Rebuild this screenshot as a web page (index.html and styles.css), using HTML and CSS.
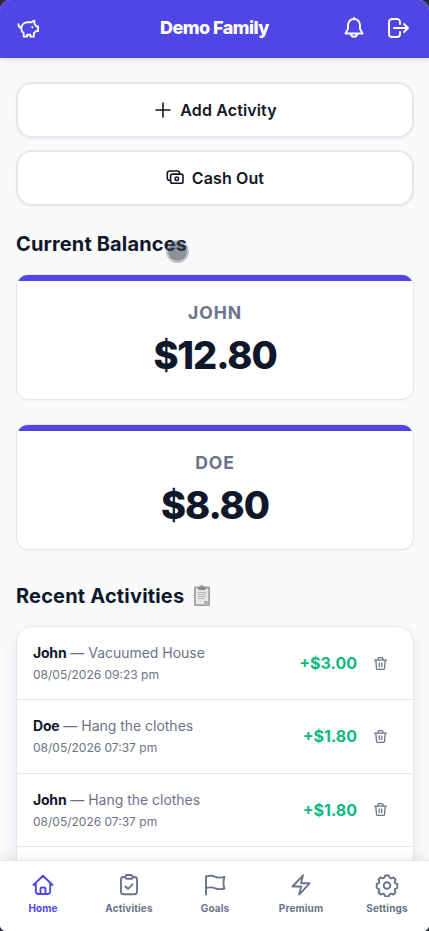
FILE: index.html
```html
<!DOCTYPE html>
<html lang="en">
<head>
<meta charset="utf-8">
<meta name="viewport" content="width=device-width, initial-scale=1">
<title>Demo Family</title>
<link rel="stylesheet" href="styles.css">
</head>
<body>
<svg class="sprite" aria-hidden="true">
  <symbol id="trash" viewBox="0 0 24 24"><path d="M2.500 6.500h19M8 6.200V4.500A2 2 0 0 1 10 2.500h4a2 2 0 0 1 2 2v1.700M4.500 6.800l1 12.200A2.500 2.500 0 0 0 8 21.500h8a2.500 2.500 0 0 0 2.500-2.500l1-12.200M10 11v6M14 11v6"/></symbol>
</svg>
<div class="app">
  <header class="topbar">
    <svg class="icon pig" viewBox="0 0 24 24"><path d="M1.500 7.500c0 2.300 1 3.700 3 3.700M4.500 12c0-4 3-6.500 7-6.500h4c.8-1.100 1.600-1.700 2.700-1.700v3.400c.9.700 1.500 1.600 1.900 2.600h1.900v5h-2.500c-.5.900-1.100 1.500-1.900 2v3.700h-3.600v-2h-3.500v2H7v-3.900c-1.600-1-2.500-2.500-2.500-4.600z"/><path class="eye" d="M16 10.500v.1"/></svg>
    <h1>Demo Family</h1>
    <div class="tools">
      <svg class="icon" viewBox="0 0 24 24"><path d="M12 3a6 6 0 0 0-6 6v3.500c0 1.700-2.500 3.600-2.500 5h17c0-1.400-2.500-3.300-2.500-5V9a6 6 0 0 0-6-6zM12 3V2M9 17.800a3 3 0 0 0 6 0"/></svg>
      <svg class="icon exit" viewBox="0 0 24 24"><path d="M14 8V6A3 3 0 0 0 11 3H6a3 3 0 0 0-3 3v12a3 3 0 0 0 3 3h5a3 3 0 0 0 3-3v-2M8 12h14M18 8l4 4-4 4"/></svg>
    </div>
  </header>
  <main>
    <div class="actions">
      <button type="button"><svg class="icon plus" viewBox="0 0 20 20"><path d="M10 3v14M3 10h14"/></svg>Add Activity</button>
      <button type="button"><svg class="icon cash" viewBox="0 0 18 18"><rect x="4.600" y="5.100" width="12.400" height="9.100" rx="1.800"/><path d="M4.300 11.300H3.500A2 2 0 0 1 1.300 9.300V4A2 2 0 0 1 3.300 2h8.400A1.800 1.800 0 0 1 13.500 4v.8"/><circle cx="10.800" cy="9.700" r="1.700"/></svg>Cash Out</button>
    </div>
    <h2 class="balances-title">Current Balances<span class="pointer"></span></h2>
    <div class="balances">
      <section class="balance"><h3>John</h3><p>$12.80</p></section>
      <section class="balance"><h3>Doe</h3><p>$8.80</p></section>
    </div>
    <h2 class="recent-title">Recent Activities
      <svg class="clipboard" viewBox="0 0 18 22"><path class="board" d="M1.500 2h15v18.500h-15z"/><path class="sheet" d="M3 4h12v12l-3 3H3z"/><path class="clip" d="M5.500 1.500h2a1.500 1.500 0 0 1 3 0h2V5h-7z"/><path class="lines" d="M5 7.500h8M5 9.500h8M5 11.500h8M5 13.500h6"/><path class="fold" d="M11.500 19v-3h3z"/></svg>
    </h2>
    <ul class="feed">
      <li><div><p class="what"><b>John</b> — Vacuumed House</p><time>08/05/2026 09:23 pm</time></div><strong>+$3.00</strong><svg class="icon trash"><use href="#trash"/></svg></li>
      <li><div><p class="what"><b>Doe</b> — Hang the clothes</p><time>08/05/2026 07:37 pm</time></div><strong>+$1.80</strong><svg class="icon trash"><use href="#trash"/></svg></li>
      <li><div><p class="what"><b>John</b> — Hang the clothes</p><time>08/05/2026 07:37 pm</time></div><strong>+$1.80</strong><svg class="icon trash"><use href="#trash"/></svg></li>
      <li></li>
    </ul>
  </main>
  <nav class="tabs">
    <a class="active"><svg class="icon" viewBox="0 0 24 24"><path d="M2.500 12L12 2.800 21.500 12M4.800 10v8.500a2.500 2.500 0 0 0 2.500 2.500h9.400a2.500 2.500 0 0 0 2.500-2.500V10M9.500 21v-5a1.500 1.500 0 0 1 1.500-1.500h2a1.500 1.500 0 0 1 1.500 1.500v5"/></svg>Home</a>
    <a><svg class="icon" viewBox="0 0 24 24"><path d="M8.500 4H6.500A2.500 2.500 0 0 0 4 6.500v12.200a2.500 2.500 0 0 0 2.500 2.500h11a2.500 2.500 0 0 0 2.500-2.500V6.500A2.500 2.500 0 0 0 17.500 4h-2M10.300 2h3.400a1.800 1.800 0 0 1 0 3.800h-3.400a1.800 1.800 0 0 1 0-3.800zM8.500 13.500l2.500 2.400 4.500-4.600"/></svg>Activities</a>
    <a><svg class="icon" viewBox="0 0 24 24"><path d="M3 21.500V3.500c4-1.200 7-.8 9.500.3 2.800 1.200 5.700 1 9 .1-1.300 4-1.300 8 0 11.600-3.300.9-6.200.9-9-.2-2.500-1-5.500-1.300-9.500-.3"/></svg>Goals</a>
    <a><svg class="icon" viewBox="0 0 24 24"><path d="M3.500 13.500L14 2.300 12 10.300h8.600L10.200 21.600l1.900-8.100z"/></svg>Premium</a>
    <a><svg class="icon" viewBox="0 0 24 24"><path d="M10.200 2.500h3.600l1 2.300 1.300.6 2.400-.9 2 2-.9 2.400.6 1.300 2.100 1v3.600l-2.100 1-.6 1.300.9 2.400-2 2-2.400-.9-1.300.6-1 2.300h-3.600l-1-2.300-1.300-.6-2.400.9-2-2 .9-2.400-.6-1.300-2.100-1v-3.600l2.100-1 .6-1.300-.9-2.400 2-2 2.400.9 1.300-.6z"/><circle cx="12" cy="12.500" r="3.300"/></svg>Settings</a>
  </nav>
</div>
</body>
</html>
```

FILE: styles.css
```css
* { box-sizing: border-box; }
html, body { height: 100%; }
body { margin: 0; overflow: hidden; background: #272a35; color: #0f172a; font-family: Inter, "Liberation Sans", sans-serif; }
h1, h2, h3, p, ul { margin: 0; padding: 0; }
ul { list-style: none; }
.sprite { position: absolute; width: 0; height: 0; }
.app { display: flex; flex-direction: column; height: 100%; overflow: hidden; background: #f9fafc; border-radius: 10px 10px 6px 6px; }
.icon { display: block; flex: none; width: 24px; height: 24px; fill: none; stroke: currentColor; stroke-width: 1.9; stroke-linecap: round; stroke-linejoin: round; }
.topbar { display: grid; grid-template-columns: 1fr auto 1fr; flex: none; align-items: center; height: 58px; padding: 0 19px 2px 17px; background: #4f46e5; color: #fff; box-shadow: 0 2px 6px #0f172a20; z-index: 1; }
.topbar h1 { font-size: 18px; line-height: 24px; font-weight: 800; letter-spacing: -.54px; margin-left: 2px; }
.tools { display: flex; justify-content: flex-end; gap: 20px; }
.pig { width: 23px; height: 23px; margin-top: 1px; }
.eye { stroke-width: 2.200; }
main { flex: 1; min-height: 0; overflow: hidden; padding: 24px 15px 0 16px; }
.actions { display: flex; flex-direction: column; gap: 12px; }
.actions button { display: flex; align-items: center; justify-content: center; gap: 8px; height: 56px; padding: 0; border: 2px solid #e5e7eb; border-radius: 16px; background: #fff; color: #111827; font: 600 16px/24px Inter, sans-serif; letter-spacing: .12px; box-shadow: 0 1px 3px #0f172a0d; }
.plus { width: 20px; height: 20px; margin-right: -1px; stroke-width: 1.600; }
.cash { width: 18px; height: 18px; stroke-width: 1.600; }
h2 { font-size: 20px; line-height: 28px; font-weight: 700; letter-spacing: .14px; }
.balances-title { position: relative; width: max-content; margin: 24px 0 16px; }
.pointer { position: absolute; left: 150px; top: 10px; width: 23px; height: 23px; border: 2px solid #6b728066; border-radius: 50%; background: #37415190; background-clip: padding-box; }
.balances { display: flex; flex-direction: column; gap: 24px; }
.balance { height: 126px; overflow: hidden; border: 1px solid #e5e7eb; border-radius: 12px; background: #fff; text-align: center; box-shadow: 0 1px 2px #0f172a0a; }
.balance::before { content: ""; display: block; height: 6px; background: #4f46e5; }
.balance h3 { margin-top: 18px; color: #6b7488; font-size: 17.600px; line-height: 28px; font-weight: 700; letter-spacing: .88px; text-transform: uppercase; }
.balance p { margin-top: 8px; font-size: 38px; line-height: 40px; font-weight: 800; letter-spacing: -1.1px; }
.recent-title { display: flex; align-items: center; gap: 9px; margin: 32px 0 16px; letter-spacing: .18px; }
.clipboard { width: 18px; height: 22px; }
.board { fill: #b4b4b6; stroke: #a0a0a3; }
.sheet { fill: #e6e6e8; }
.clip { fill: #8c8c8f; }
.lines { fill: none; stroke: #aaaaad; stroke-width: .8; }
.fold { fill: #8d8d90; }
.feed { overflow: hidden; border: 1px solid #e5e7eb; border-radius: 16px; background: #fff; box-shadow: 0 8px 18px #0f172a14; }
.feed li { display: flex; align-items: center; height: 73.300px; padding: 0 24px 0 16px; border-bottom: 1px solid #e5e7eb; }
.feed li:first-child { border-bottom-width: 1.500px; }
.feed div { flex: 1; }
.what { color: #6b7488; font-size: 14px; line-height: 20px; letter-spacing: -.02px; }
.what b { color: #0f172a; font-weight: 700; letter-spacing: -.2px; }
time { display: block; margin-top: 4px; color: #6b7488; font-size: 12px; line-height: 16px; }
.feed strong { color: #10b981; font-size: 16px; line-height: 24px; font-weight: 700; }
.trash { width: 15px; height: 15px; margin: 0 1px 0 16px; color: #6b7488; stroke-width: 2.100; }
.tabs { display: grid; grid-template-columns: repeat(5, 86px); flex: none; height: 71px; padding-top: 12px; border-top: 1px solid #e5e7eb; background: #fff; box-shadow: 0 -2px 8px #0f172a12; z-index: 1; }
.tabs a { display: flex; flex-direction: column; align-items: center; gap: 4px; color: #6b7488; font-size: 10px; line-height: 15px; font-weight: 700; letter-spacing: .12px; }
.tabs .active { color: #4f46e5; }
```
